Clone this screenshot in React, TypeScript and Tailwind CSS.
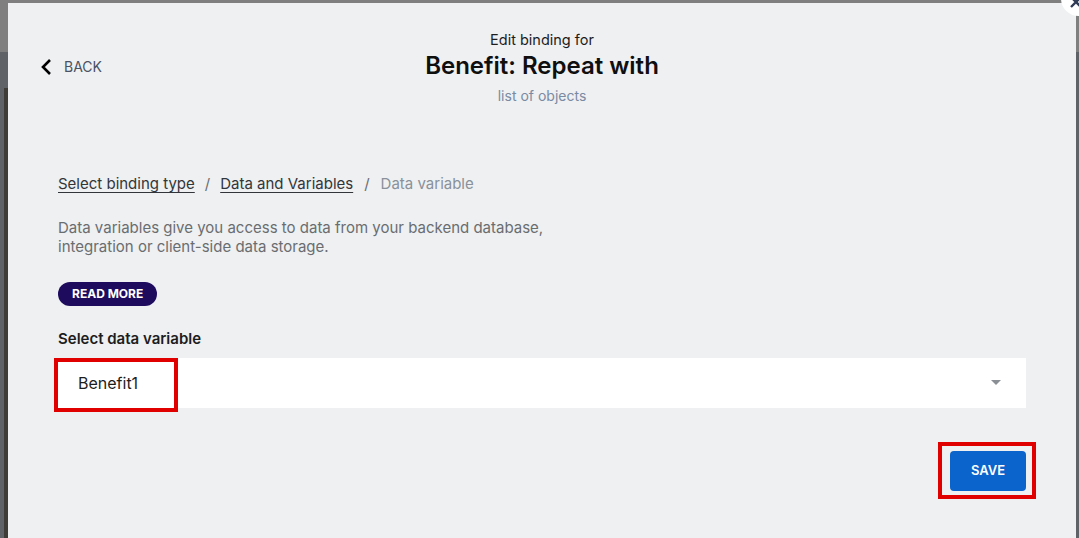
import React from "react";

export default function App() {
  return (
    <div className="relative w-[1079px] h-[538px] overflow-hidden bg-[#5f6368]" style={{ fontFamily: "Inter, 'Noto Sans', Arial, sans-serif" }}>
      {/* backdrop strips */}
      <div className="absolute left-0 top-0 w-full h-[52px] bg-[#7f7f7f]" />
      <div className="absolute left-[4px] top-[88px] w-[4px] h-[450px] bg-[#3f3b37]" />
      {/* modal */}
      <div className="absolute left-[8px] top-[3px] w-[1068px] h-[535px] bg-[#eef0f2]">
        <div className="relative h-full">
          <div className="flex flex-col items-center pt-[27px]">
            <div className="text-[14.5px] leading-[20px] text-[#1d1d1d]">Edit binding for</div>
            <div className="text-[24px] leading-[30px] font-semibold text-[#0f0f0f] mt-[1px]">Benefit: Repeat with</div>
            <div className="mt-[5px] text-[14px] leading-[20px] text-[#7a8aa3]">list of objects</div>
          </div>
          <div className="absolute left-[32px] top-[53px] flex items-center gap-[12px] text-[#4a5263] text-[14px]">
            <svg width="12" height="18" viewBox="0 0 12 18">
              <path d="M10 2 L3 9 L10 16" fill="none" stroke="#000" strokeWidth="2.6" />
            </svg>
            <span>BACK</span>
          </div>
          <div className="px-[50px] pt-[68px]">
            <div className="flex items-center text-[15px] leading-[20px] text-[#32363a]">
              <span className="underline underline-offset-[3px] decoration-1">Select binding type</span>
              <span className="mx-[10px] text-[#6a6d70]">/</span>
              <span className="underline underline-offset-[3px] decoration-1">Data and Variables</span>
              <span className="mx-[11px] text-[#6a6d70]">/</span>
              <span className="text-[#89919a]">Data variable</span>
            </div>
            <p className="mt-[24px] text-[15px] leading-[19px] text-[#6a6d70]">
              Data variables give you access to data from your backend database,
              <br />
              integration or client-side data storage.
            </p>
            <div className="mt-[26px] inline-flex items-center h-[24px] px-[14px] rounded-full bg-[#1e0b5e] text-white text-[12px] font-bold">
              READ MORE
            </div>
            <div className="mt-[23px] text-[15px] leading-[20px] font-semibold text-[#1d1d1d]">Select data variable</div>
            <div className="mt-[9px] relative h-[50px] bg-white flex items-center justify-between pl-[20px] pr-[24px]">
              <span className="text-[16px] text-[#1d1d1d]">Benefit1</span>
              <svg width="12" height="6" viewBox="0 0 12 6">
                <path d="M1 0 L11 0 L6 5 Z" fill="#8a8f96" />
              </svg>
              <div className="absolute left-[-4px] top-0 w-[124px] h-[54px] border-[4px] border-[#e00000]" />
            </div>
            <div className="mt-[43px] flex justify-end">
              <div className="relative">
                <div className="h-[40px] w-[76px] rounded-[4px] bg-[#0b63cc] flex items-center justify-center text-white text-[13px] font-semibold">
                  SAVE
                </div>
                <div className="absolute left-[-12px] top-[-9px] w-[98px] h-[57px] border-[4px] border-[#e00000]" />
              </div>
            </div>
          </div>
        </div>
      </div>
      {/* close button */}
      <div className="absolute left-[1061px] top-[-19px] w-[35px] h-[35px] rounded-full bg-white flex items-center justify-center">
        <svg width="14" height="14" viewBox="0 0 14 14" className="mt-[6px] mr-[6px]">
          <path d="M2 2 L12 12 M12 2 L2 12" stroke="#2f3a55" strokeWidth="2.4" />
        </svg>
      </div>
    </div>
  );
}
